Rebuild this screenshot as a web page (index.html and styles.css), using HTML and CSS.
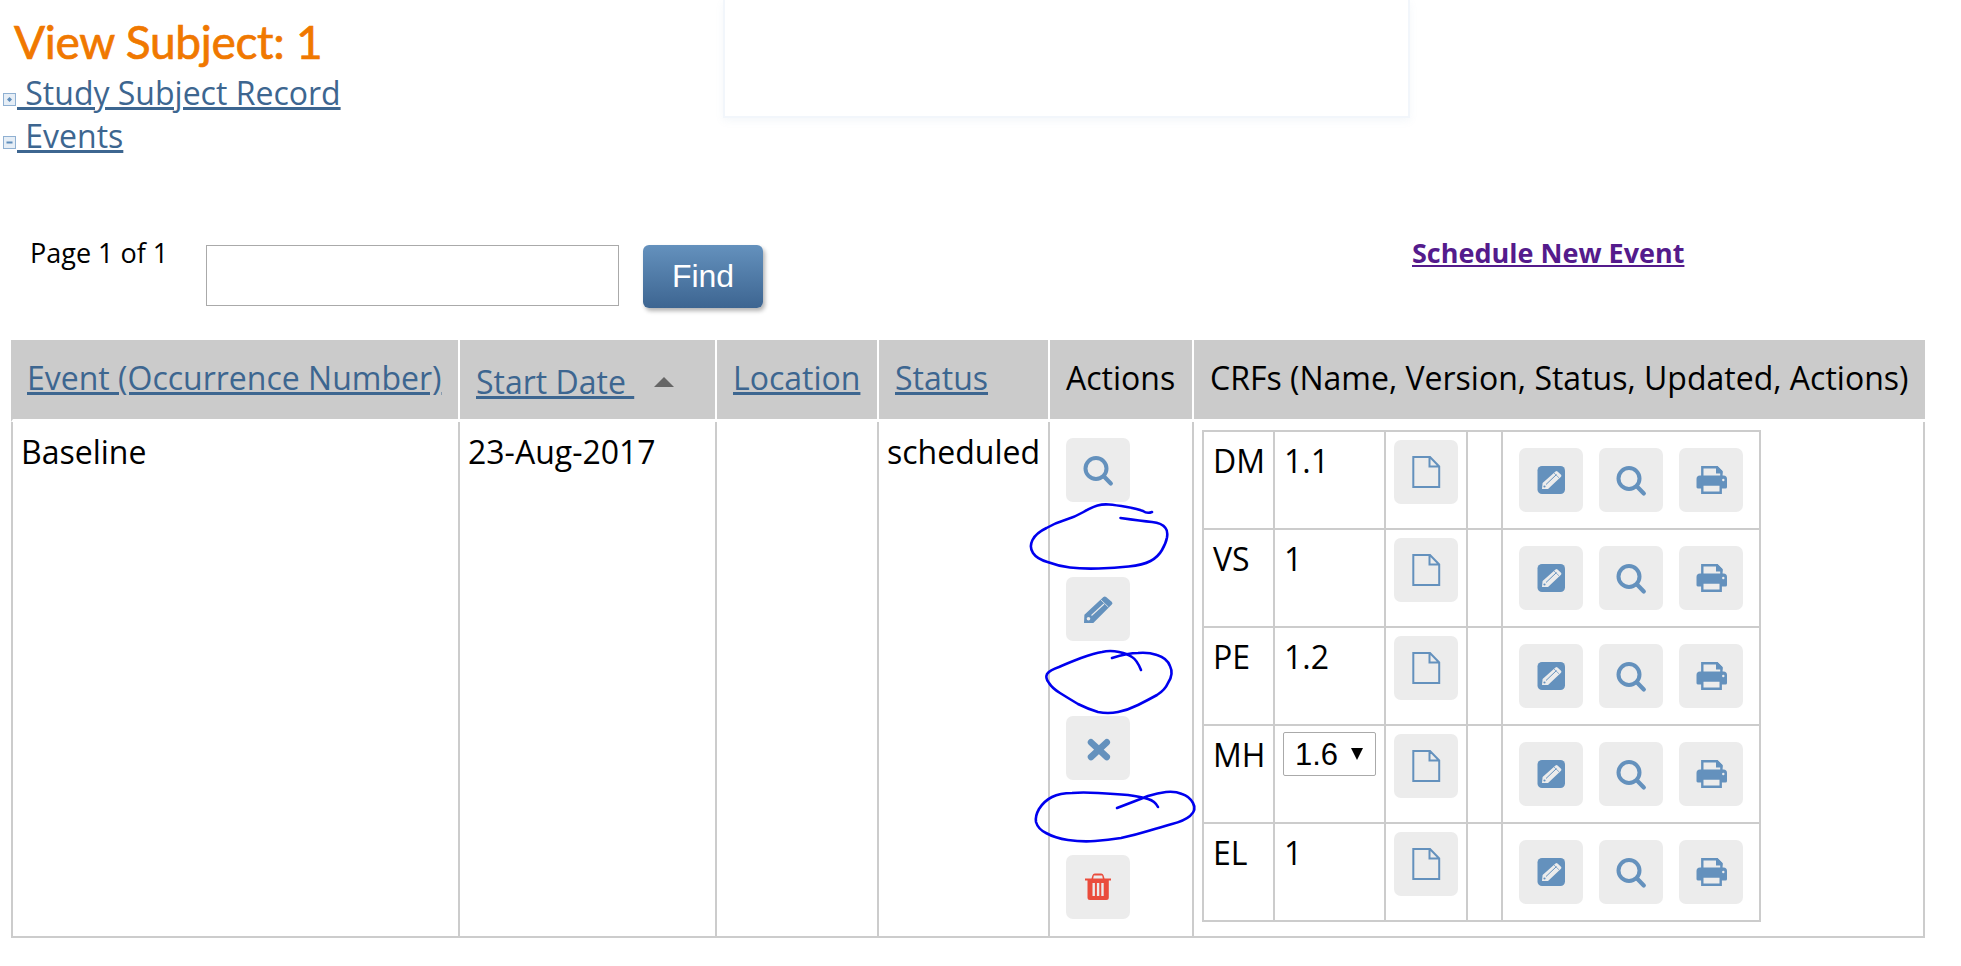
FILE: index.html
```html
<!DOCTYPE html>
<html lang="en">
<head>
<meta charset="utf-8">
<title>View Subject: 1</title>
<link rel="stylesheet" href="styles.css">
</head>
<body>
<svg class="sprite" aria-hidden="true">
  <symbol id="i-search" viewBox="0 0 64 64"><circle cx="30" cy="30.500" r="10.500" fill="none" stroke="currentColor" stroke-width="4"/><path d="M38.500 39 44.800 45.500" fill="none" stroke="currentColor" stroke-width="4.200" stroke-linecap="round"/></symbol>
  <symbol id="i-pencil" viewBox="0 0 64 64"><path fill="currentColor" d="M18 46l.4-8.300 19-17.700a2 2 0 0 1 2.700 0l5.600 4.700a2 2 0 0 1 .1 2.900L27.300 46z"/><path d="M34.700 22.700 42.300 30" stroke="#ececec" stroke-width=".8"/><path d="M25.500 38.500 38 27" stroke="#ececec" stroke-width="1.100"/><circle cx="22.500" cy="41.800" r="1.800" fill="#ececec"/></symbol>
  <symbol id="i-x" viewBox="0 0 64 64"><path d="M25 26.300 40.800 41M40.800 26.300 25 41" fill="none" stroke="currentColor" stroke-width="6.500" stroke-linecap="round"/></symbol>
  <symbol id="i-trash" viewBox="0 0 64 64"><path fill="currentColor" d="M19 23.500h6.500l1-3.300a2.500 2.500 0 0 1 2.300-1.700h6.400a2.500 2.500 0 0 1 2.300 1.700l1 3.300h6.500v2h-2.200V42.500a2.500 2.500 0 0 1-2.500 2.500H24a2.500 2.500 0 0 1-2.500-2.500V25.500H19z"/><path fill="#ececec" d="M27.800 20.400h8.400l.6 3h-9.600zM26.500 28h2.400v13h-2.400zM30.900 28h2.400v13h-2.400zM35.300 28h2.400v13h-2.400z"/></symbol>
  <symbol id="i-doc" viewBox="0 0 64 64"><path d="M19.300 17H36l9.200 9.500V47H19.300zM35.500 17v9.500h9.700" fill="none" stroke="currentColor" stroke-width="2"/></symbol>
  <symbol id="i-edit" viewBox="0 0 64 64"><rect x="18.500" y="18" width="27.500" height="28" rx="4.500" fill="currentColor"/><path fill="#ececec" d="M23 41l.6-6L36.500 23.500a1.500 1.500 0 0 1 2 0l3.500 3.200a1.500 1.500 0 0 1 0 2L29 41z"/><path d="M27 36.500 37.500 26.500" stroke="currentColor" stroke-width="1"/><path d="M35 25 40 29.800" stroke="currentColor" stroke-width=".7"/><circle cx="25.500" cy="38.500" r="1.100" fill="currentColor"/></symbol>
  <symbol id="i-print" viewBox="0 0 64 64"><path fill="none" stroke="currentColor" stroke-width="2.400" d="M23.300 30V19.200h14.500l4.600 4.600V30"/><path fill="currentColor" d="M37 18h1.500l5 5v2.500H37z"/><path fill="currentColor" d="M21 27.500h23.500a3.500 3.500 0 0 1 3.500 3.500v8a1.500 1.500 0 0 1-1.500 1.500H18.800A1.500 1.500 0 0 1 17.500 39v-8a3.500 3.500 0 0 1 3.500-3.500z"/><path fill="#ececec" stroke="currentColor" stroke-width="2.400" d="M23.300 36.500h18.400v8.200H23.300z"/><circle cx="44.300" cy="32" r="1.200" fill="#ececec"/></symbol>
</svg>

<div class="top">
  <div class="intro">
    <h1 class="title">View Subject: 1</h1>
    <div class="section">
      <svg class="toggle" viewBox="0 0 13 13"><rect x=".5" y=".5" width="12" height="12" class="toggle-box"/><path d="M6.500 4 9 6.500 6.500 9 4 6.500z" class="toggle-mark"/></svg><a href="#" class="link"> Study Subject Record</a>
    </div>
    <div class="section">
      <svg class="toggle" viewBox="0 0 13 13"><rect x=".5" y=".5" width="12" height="12" class="toggle-box"/><rect x="3.500" y="5.500" width="6" height="2" class="toggle-mark"/></svg><a href="#" class="link"> Events</a>
    </div>
  </div>
  <div class="notice"></div>
</div>

<div class="toolbar">
  <span class="pager">Page 1 of 1</span>
  <input class="find-input" type="text" aria-label="Find">
  <button class="find-btn" type="button">Find</button>
  <a href="#" class="schedule">Schedule New Event</a>
</div>

<table class="events">
  <colgroup>
    <col class="c-event"><col class="c-date"><col class="c-loc"><col class="c-status"><col class="c-actions"><col class="c-crfs">
  </colgroup>
  <thead>
    <tr>
      <th><a href="#" class="link">Event (Occurrence Number)</a></th>
      <th class="th-sorted"><a href="#" class="link">Start Date&nbsp;</a><span class="sort-arrow"></span></th>
      <th><a href="#" class="link">Location</a></th>
      <th><a href="#" class="link">Status</a></th>
      <th>Actions</th>
      <th>CRFs (Name, Version, Status, Updated, Actions)</th>
    </tr>
  </thead>
  <tbody>
    <tr>
      <td>Baseline</td>
      <td>23-Aug-2017</td>
      <td></td>
      <td>scheduled</td>
      <td class="td-actions">
        <div class="action-stack">
          <a href="#" class="btn"><svg class="ico"><use href="#i-search"/></svg></a>
          <a href="#" class="btn"><svg class="ico"><use href="#i-pencil"/></svg></a>
          <a href="#" class="btn"><svg class="ico"><use href="#i-x"/></svg></a>
          <a href="#" class="btn btn-danger"><svg class="ico"><use href="#i-trash"/></svg></a>
        </div>
      </td>
      <td class="td-crfs">
        <table class="crfs">
          <colgroup><col class="k-name"><col class="k-ver"><col class="k-doc"><col class="k-gap"><col class="k-act"></colgroup>
          <tr>
            <td>DM</td><td>1.1</td>
            <td class="cell-doc"><a href="#" class="btn"><svg class="ico"><use href="#i-doc"/></svg></a></td><td></td>
            <td class="cell-act"><div class="act-row"><a href="#" class="btn"><svg class="ico"><use href="#i-edit"/></svg></a><a href="#" class="btn"><svg class="ico"><use href="#i-search"/></svg></a><a href="#" class="btn"><svg class="ico"><use href="#i-print"/></svg></a></div></td>
          </tr>
          <tr>
            <td>VS</td><td>1</td>
            <td class="cell-doc"><a href="#" class="btn"><svg class="ico"><use href="#i-doc"/></svg></a></td><td></td>
            <td class="cell-act"><div class="act-row"><a href="#" class="btn"><svg class="ico"><use href="#i-edit"/></svg></a><a href="#" class="btn"><svg class="ico"><use href="#i-search"/></svg></a><a href="#" class="btn"><svg class="ico"><use href="#i-print"/></svg></a></div></td>
          </tr>
          <tr>
            <td>PE</td><td>1.2</td>
            <td class="cell-doc"><a href="#" class="btn"><svg class="ico"><use href="#i-doc"/></svg></a></td><td></td>
            <td class="cell-act"><div class="act-row"><a href="#" class="btn"><svg class="ico"><use href="#i-edit"/></svg></a><a href="#" class="btn"><svg class="ico"><use href="#i-search"/></svg></a><a href="#" class="btn"><svg class="ico"><use href="#i-print"/></svg></a></div></td>
          </tr>
          <tr>
            <td>MH</td>
            <td class="cell-select"><span class="select-wrap"><select class="version" aria-label="Version"><option>1.6</option></select></span></td>
            <td class="cell-doc"><a href="#" class="btn"><svg class="ico"><use href="#i-doc"/></svg></a></td><td></td>
            <td class="cell-act"><div class="act-row"><a href="#" class="btn"><svg class="ico"><use href="#i-edit"/></svg></a><a href="#" class="btn"><svg class="ico"><use href="#i-search"/></svg></a><a href="#" class="btn"><svg class="ico"><use href="#i-print"/></svg></a></div></td>
          </tr>
          <tr>
            <td>EL</td><td>1</td>
            <td class="cell-doc"><a href="#" class="btn"><svg class="ico"><use href="#i-doc"/></svg></a></td><td></td>
            <td class="cell-act"><div class="act-row"><a href="#" class="btn"><svg class="ico"><use href="#i-edit"/></svg></a><a href="#" class="btn"><svg class="ico"><use href="#i-search"/></svg></a><a href="#" class="btn"><svg class="ico"><use href="#i-print"/></svg></a></div></td>
          </tr>
        </table>
      </td>
    </tr>
  </tbody>
</table>

<svg class="ink" viewBox="0 0 1961 966" aria-hidden="true">
  <path d="M1152,512 Q1147,514 1143,511 Q1138,509 1127,507 Q1115,505 1109,504.500 Q1103,504 1097.500,505.500 Q1092,507 1083.500,512 Q1075,517 1065,520 Q1055,523 1046.500,528 Q1036,533 1032.500,540 Q1029,547 1033,553 Q1037,559 1047.500,562 Q1058,566 1070,567.500 Q1082,569 1098.500,568.500 Q1115,568 1128.500,566.500 Q1143,565 1150.500,561 Q1158,557 1162,550 Q1166,543 1167,537.500 Q1168,531 1165.500,528 Q1162,523 1152,522 Q1142,521 1120.500,518"/>
  <path d="M1112,658 Q1128,653 1138,653 Q1148,652 1157,655 Q1167,658 1170,666 Q1174,674 1168,683 Q1165,690 1157,695 Q1148,700 1138,705 Q1128,710 1118,712 Q1108,714 1098,712 Q1088,709 1078,704 Q1068,698 1060,693 Q1052,688 1049,683 Q1045,678 1047,674 Q1050,670 1059,667 Q1068,663 1081,658 Q1095,653 1102,652 Q1110,650 1119,652 Q1128,654 1132,657 Q1137,660 1141,670"/>
  <path d="M1158,807 Q1155,801 1148,799 Q1142,797 1128,795 Q1115,794 1098,793 Q1082,792 1072,793 Q1060,793 1052,797 Q1044,801 1039,809 Q1035,816 1036,822 Q1038,829 1046,833 Q1055,838 1068,840 Q1082,842 1095,841 Q1108,840 1121,838 Q1135,835 1148,831 Q1162,827 1172,824 Q1184,821 1190,816 Q1197,810 1193,803 Q1189,796 1182,794 Q1175,791 1166,792 Q1158,793 1148,796 Q1138,800 1117,808"/>
</svg>
</body>
</html>
```

FILE: styles.css
```css
* { box-sizing: border-box; }
html, body { margin: 0; padding: 0; background: #fff; }
body {
  position: relative;
  height: 966px;
  overflow: hidden;
  font-family: "Open Sans", sans-serif;
  font-size: 32px;
  line-height: 41px;
  color: #000;
}
.sprite { width: 0; height: 0; position: absolute; }

.top { display: flex; height: 235px; }
.intro { width: 723px; padding: 12px 0 0 3px; }
.title {
  margin: 0 0 0 11px;
  font-family: Lato, sans-serif;
  font-size: 46px;
  font-weight: 400;
  line-height: 60px;
  letter-spacing: -.3px;
  color: #f07800;
  -webkit-text-stroke: .7px #f07800;
}
.section { height: 43px; line-height: 43px; margin-top: -1px; margin-bottom: 1px; }
.toggle { width: 13px; height: 13px; margin-right: 1px; vertical-align: -1px; }
.toggle-box { fill: #e6eef6; stroke: #8fb0d2; }
.toggle-mark { fill: #5f8dbb; }
.link { color: #3d6690; text-decoration: underline; }
.notice {
  width: 687px;
  height: 118px;
  border: 2px solid #f2f6fb;
  border-top: 0;
  box-shadow: 0 3px 8px rgba(120, 150, 190, .08);
}

.toolbar { display: flex; align-items: flex-start; height: 105px; padding-left: 30px; }
.pager { width: 176px; font-size: 27px; line-height: 36px; }
.find-input {
  width: 413px;
  height: 61px;
  margin-top: 10px;
  border: 1px solid #aaa;
  background: #fff;
}
.find-btn {
  width: 120px;
  height: 63px;
  margin: 10px 0 0 24px;
  padding: 0;
  border: 0;
  border-radius: 6px;
  background: linear-gradient(#6491bd, #3d6591);
  box-shadow: 2px 3px 4px rgba(0, 0, 0, .3);
  font-family: "Liberation Sans", sans-serif;
  font-size: 32px;
  color: #fff;
}
.schedule {
  margin-left: 649px;
  font-size: 27px;
  line-height: 36px;
  font-weight: 700;
  color: #541b8c;
  text-decoration: underline;
}

.events {
  margin-left: 11px;
  width: 1914px;
  table-layout: fixed;
  border-collapse: separate;
  border-spacing: 0;
}
.c-event { width: 447px; }
.c-date { width: 257px; }
.c-loc { width: 162px; }
.c-status { width: 171px; }
.c-actions { width: 144px; }
.c-crfs { width: 733px; }

.events > thead > tr > th {
  height: 82px;
  padding: 0 0 4px 16px;
  border-left: 2px solid #fff;
  border-bottom: 3px solid #fff;
  background: #cbcbcb;
  background-clip: padding-box;
  font-weight: 400;
  text-align: left;
  white-space: nowrap;
}
.events > thead > tr > th:first-child { border-left-color: #cbcbcb; padding-left: 14px; background-clip: border-box; }
.events > thead > tr > th.th-sorted { padding-top: 6px; padding-bottom: 2px; }
.sort-arrow {
  display: inline-block;
  width: 0;
  height: 0;
  margin-left: 20px;
  vertical-align: 7px;
  border-left: 10px solid transparent;
  border-right: 10px solid transparent;
  border-bottom: 10px solid #666;
}

.events > tbody > tr > td {
  padding: 9px 0 0 8px;
  border-left: 2px solid #ccc;
  border-bottom: 2px solid #ccc;
  vertical-align: top;
}
.events > tbody > tr > td:last-child { border-right: 2px solid #ccc; }
.events > tbody > tr > td.td-actions { padding: 16px 0 0 16px; }
.events > tbody > tr > td.td-crfs { padding: 8px 0 14px 8px; }
.action-stack { display: flex; flex-direction: column; gap: 75px; }

.btn {
  display: flex;
  flex: none;
  width: 64px;
  height: 64px;
  border-radius: 7px;
  background: #ececec;
  color: #6491bd;
}
.btn-danger { color: #ea4c3c; }
.ico { width: 64px; height: 64px; }

.crfs {
  width: 557px;
  table-layout: fixed;
  border-collapse: collapse;
  border: 2px solid #ccc;
}
.k-name { width: 71px; }
.k-ver { width: 111px; }
.k-doc { width: 82px; }
.k-gap { width: 35px; }
.k-act { width: 258px; }
.crfs td {
  height: 98px;
  padding: 8px 0 0 9px;
  border: 2px solid #ccc;
  vertical-align: top;
}
.crfs td.cell-select { padding: 6px 0 0 8px; }
.crfs td.cell-doc { padding: 8px 0 0 8px; }
.crfs td.cell-act { padding: 16px 0 0 16px; }
.act-row { display: flex; gap: 16px; }

.select-wrap { position: relative; display: block; width: 93px; height: 44px; }
.select-wrap::after {
  content: "";
  position: absolute;
  top: 16px;
  right: 13px;
  border-left: 6px solid transparent;
  border-right: 6px solid transparent;
  border-top: 12px solid #000;
}
.version {
  display: block;
  width: 93px;
  height: 44px;
  padding: 0 0 0 11px;
  border: 1px solid #aaa;
  border-radius: 2px;
  background: #fff;
  appearance: none;
  font-family: "Liberation Sans", sans-serif;
  font-size: 31px;
  color: #000;
}

.ink {
  position: absolute;
  top: 0;
  left: 0;
  width: 1961px;
  height: 966px;
  pointer-events: none;
}
.ink path { fill: none; stroke: #0000ee; stroke-width: 2.600; stroke-linecap: round; stroke-linejoin: round; }
```
